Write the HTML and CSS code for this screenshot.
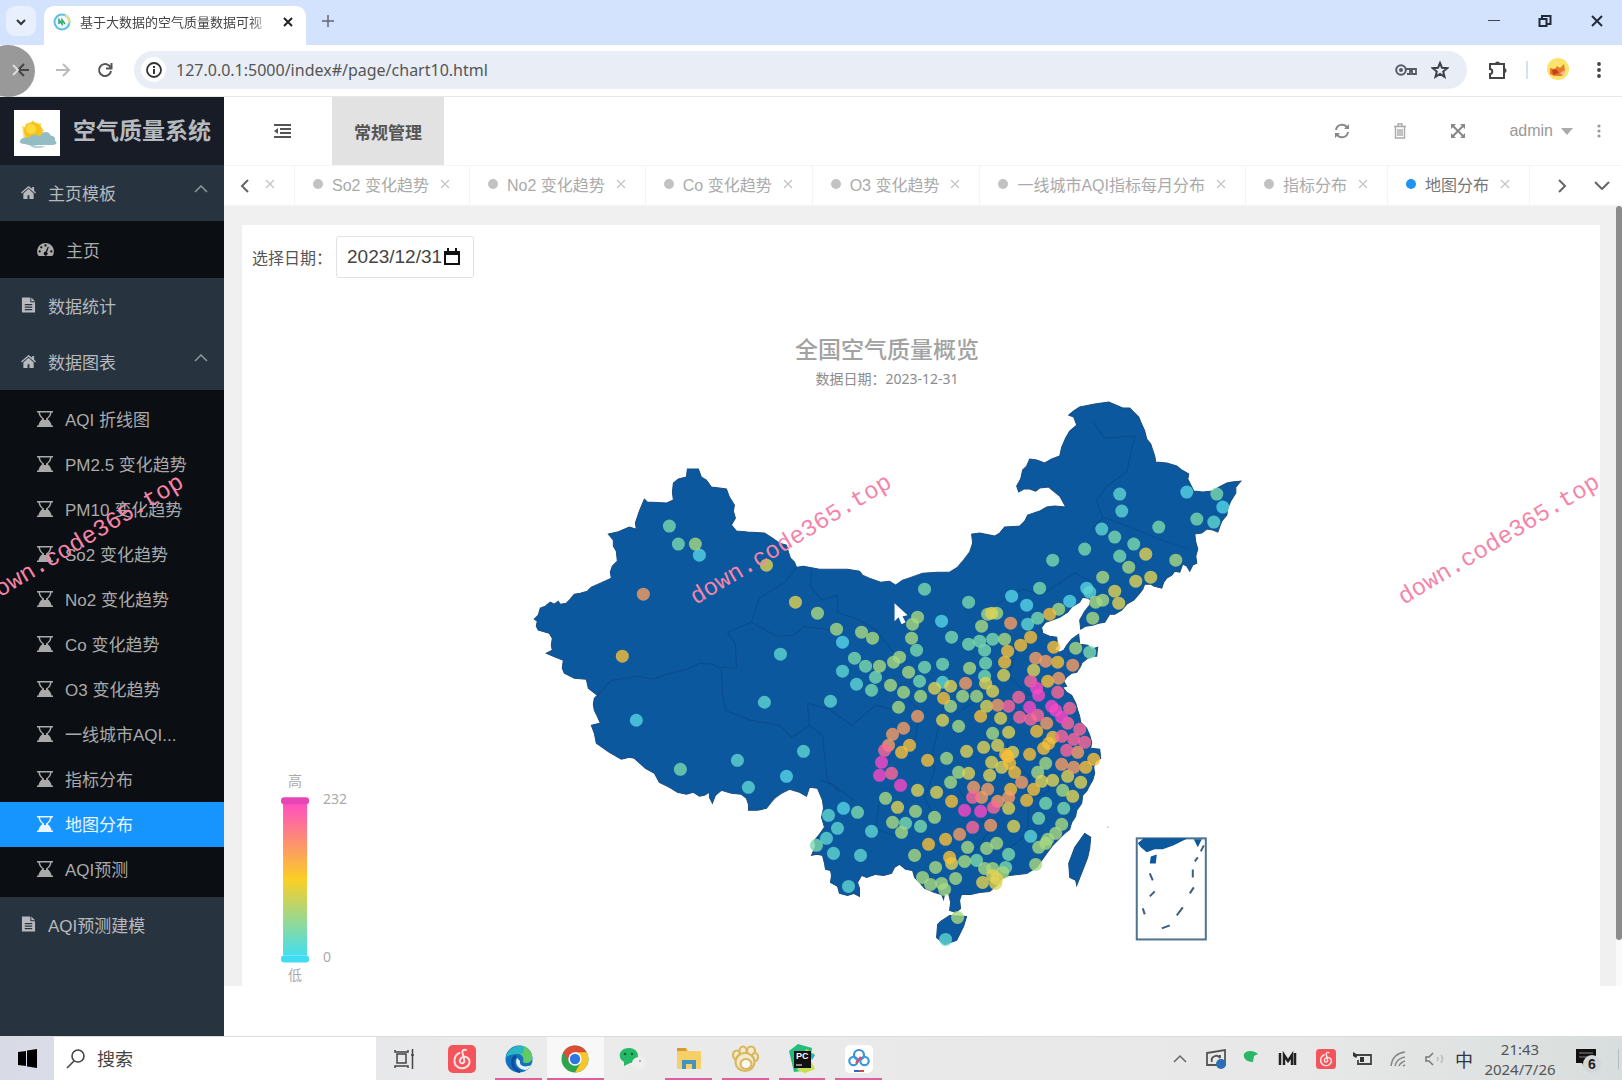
FILE: index.html
```html
<!DOCTYPE html>
<html lang="zh-CN">
<head>
<meta charset="utf-8">
<title>基于大数据的空气质量数据可视化</title>
<link rel="stylesheet" href="styles.css">
</head>
<body>
<svg class="defs" width="0" height="0" aria-hidden="true">
  <symbol id="i-home" viewBox="0 0 16 16"><path d="M8 1 0 8l1 1 7-6 7 6 1-1-2-2V2h-2v2zM8 4 2.500 9v6H7v-4h2v4h4.500V9z"/></symbol>
  <symbol id="i-file" viewBox="0 0 16 16"><path fill-rule="evenodd" d="M1 0h9v5h5v11H1zM11 0l4 4h-4zM4 7v1.300h8V7zm0 2.600v1.300h8V9.600zm0 2.600v1.300h8v-1.300z"/></symbol>
  <symbol id="i-dash" viewBox="0 0 18 16"><path fill-rule="evenodd" d="M9 1a9 9 0 0 0-8 13l1 1h14l1-1A9 9 0 0 0 9 1zM9 2.500a1.200 1.200 0 1 1 0 2.400 1.200 1.200 0 0 1 0-2.400zM4.500 4.500a1.200 1.200 0 1 1 0 2.400 1.200 1.200 0 0 1 0-2.400zM2.800 8.800a1.200 1.200 0 1 1 0 2.400 1.200 1.200 0 0 1 0-2.400zm12.400 0a1.200 1.200 0 1 1 0 2.400 1.200 1.200 0 0 1 0-2.400zM11.500 5l1 .4-2 5.600a2 2 0 1 1-1.500-.5z"/></symbol>
  <symbol id="i-glass" viewBox="0 0 16 16"><path fill-rule="evenodd" d="M0 0h16v1.500h-1.500C14.500 4 12.500 6.500 10.500 8c2 1.500 4 4 4 6.500H16V16H0v-1.500h1.500C1.500 12 3.500 9.500 5.500 8c-2-1.500-4-4-4-6.500H0zM3 1.500C3 4 5 6.500 7 7.500v1.500h2v-1.500c2-1 4-3.500 4-6z"/></symbol>
  <symbol id="i-up" viewBox="0 0 14 8"><path d="M1 7l6-6 6 6" fill="none" stroke="currentColor" stroke-width="1.500"/></symbol>
  <symbol id="i-x" viewBox="0 0 12 12"><path d="M2 2l8 8M10 2l-8 8" fill="none" stroke="currentColor" stroke-width="1.300"/></symbol>
  <symbol id="i-netease" viewBox="0 0 28 28"><rect width="28" height="28" rx="5" fill="#f4545c"/><path d="M18 5c-3-1-4 1-3.500 3l1.800 7.500c.5 3-4 4-4.500.8-.4-3 3-5 6-4.300 5 1.500 5 8-.3 10.500-6 2.500-11.500-1.500-11-7.500.3-3.500 2.500-6 5-7" fill="none" stroke="#ffe3e3" stroke-width="2" stroke-linecap="round"/></symbol>
</svg>

<header class="browser">
  <div class="tabstrip">
    <button class="tab-search" aria-label="搜索标签页"><svg width="10" height="7" viewBox="0 0 10 7"><path d="M1 1l4 4 4-4" fill="none" stroke="#333" stroke-width="2"/></svg></button>
    <div class="browser-tab">
      <svg width="18" height="18" viewBox="0 0 18 18"><circle cx="9" cy="9" r="7.500" fill="#eefafa" stroke="#62bde6" stroke-width="2"/><path d="M12 2a8 8 0 0 1 4 8" fill="none" stroke="#efe07a" stroke-width="2"/><path d="M6 11V7l3 4V7l3 4" fill="none" stroke="#38a878" stroke-width="1.600"/></svg>
      <span class="browser-tab-title">基于大数据的空气质量数据可视</span>
      <button class="plain" aria-label="关闭标签页"><svg width="12" height="12" viewBox="0 0 12 12"><path d="M2 2l8 8M10 2l-8 8" stroke="#222" stroke-width="2"/></svg></button>
    </div>
    <button class="plain new-tab" aria-label="新标签页"><svg width="12" height="12" viewBox="0 0 12 12"><path d="M6 0v12M0 6h12" stroke="#667" stroke-width="1.500"/></svg></button>
    <div class="window-buttons">
      <button class="plain" aria-label="最小化"><svg width="12" height="12" viewBox="0 0 12 12"><path d="M0 5.500h12" stroke="#444"/></svg></button>
      <button class="plain" aria-label="还原"><svg width="14" height="14" viewBox="0 0 14 14"><path d="M1.500 5h7v7h-7zM4 5V2h8.500v8H9" fill="none" stroke="#222b38" stroke-width="2"/></svg></button>
      <button class="plain" aria-label="关闭"><svg width="14" height="14" viewBox="0 0 14 14"><path d="M2 2l10 10M12 2L2 12" stroke="#222b38" stroke-width="2"/></svg></button>
    </div>
  </div>
  <div class="toolbar">
    <span class="touch-ring"></span>
    <button class="plain nav-btn" aria-label="后退"><svg width="18" height="16" viewBox="0 0 18 16"><path d="M17 8H7M12 2L6 8l6 6" fill="none" stroke="#444" stroke-width="2"/><path d="M1 3l5 5-5 5" fill="none" stroke="#ddd" stroke-width="2"/></svg></button>
    <button class="plain nav-btn" aria-label="前进"><svg width="16" height="14" viewBox="0 0 16 14"><path d="M1 7h13M8 1l6 6-6 6" fill="none" stroke="#bbb" stroke-width="2"/></svg></button>
    <button class="plain nav-btn" aria-label="刷新"><svg width="16" height="16" viewBox="0 0 16 16"><path d="M14 9a6 6 0 1 1-2-5.500L14 6M14.500 1v5.500H9" fill="none" stroke="#555" stroke-width="2"/></svg></button>
    <div class="omnibox">
      <span class="site-info"><svg width="16" height="16" viewBox="0 0 16 16"><circle cx="8" cy="8" r="7" fill="none" stroke="#333" stroke-width="1.800"/><path d="M8 7v5M8 4v2" stroke="#333" stroke-width="2"/></svg></span>
      <input class="url" type="text" aria-label="地址" value="127.0.0.1:5000/index#/page/chart10.html">
      <svg width="22" height="12" viewBox="0 0 22 12"><circle cx="6" cy="6" r="4.800" fill="none" stroke="#555b66" stroke-width="2"/><circle cx="6" cy="6" r="2" fill="#555b66"/><path d="M11 5h10v5h-4V7h-2v3h-3" fill="none" stroke="#555b66" stroke-width="1.800"/></svg>
      <svg width="18" height="18" viewBox="0 0 18 18"><path d="M9 2l2 4.800 5.200.4-4 3.400 1.300 5.200L9 13l-4.500 2.800 1.300-5.200-4-3.400L7 6.800z" fill="none" stroke="#3c4048" stroke-width="2"/></svg>
    </div>
    <button class="plain" aria-label="扩展程序"><svg width="20" height="20" viewBox="0 0 20 20"><path d="M2 4h14v14H2v-4c3 0 3-5 0-5z" fill="none" stroke="#444" stroke-width="2"/><path d="M7 4a2.500 2.500 0 0 1 5 0zM16 8a2.500 2.500 0 0 1 0 5z" fill="#444"/></svg></button>
    <span class="toolbar-sep"></span>
    <button class="plain" aria-label="用户"><svg width="24" height="24" viewBox="0 0 24 24"><circle cx="12" cy="11" r="11" fill="#fbe46c"/><path d="M4 10l5 1 2-3 3 2 4-4 1 7-3 5-8 0-4-2z" fill="#e87a2c"/><path d="M6 12l4-1 3 4-6 2z" fill="#c5401e"/><path d="M14 15l5-3-2 6z" fill="#f3b6a0"/></svg></button>
    <button class="plain" aria-label="菜单"><svg width="4" height="18" viewBox="0 0 4 18" fill="#444"><circle cx="2" cy="3" r="1.900"/><circle cx="2" cy="9" r="1.900"/><circle cx="2" cy="15" r="1.900"/></svg></button>
  </div>
</header>

<div class="app">
  <aside class="sidebar">
    <div class="brand">
      <svg class="brand-logo" width="46" height="46" viewBox="0 0 46 46"><rect width="46" height="46" fill="#fff"/><path d="M8 16l3 1 1-4 4 1 3-4 3 4 5-1 0 4 3 3-2 9-18 1z" fill="#f6d96a"/><circle cx="19" cy="21" r="9" fill="#f8c11a"/><circle cx="17" cy="19" r="5" fill="#fddb3c"/><path d="M6 31c1-4 7-4 9-3 2-4 9-4 11-1 1-6 9-7 11-1 2-1 5 2 4 5 3 1 1 4-2 4H24l-6 1-7-2c-3 0-6-1-5-3z" fill="#93bcc4"/><path d="M16 36h16l-5 2h-7z" fill="#b9d2d6"/></svg>
      <h1>空气质量系统</h1>
    </div>
    <nav>
      <a class="menu" href="#"><svg width="15" height="15"><use href="#i-home"/></svg><span>主页模板</span><svg class="fold" width="14" height="8"><use href="#i-up"/></svg></a>
      <div class="submenu">
        <a href="#"><svg width="17" height="15"><use href="#i-dash"/></svg><span>主页</span></a>
      </div>
      <a class="menu" href="#"><svg width="15" height="16"><use href="#i-file"/></svg><span>数据统计</span></a>
      <a class="menu" href="#"><svg width="15" height="15"><use href="#i-home"/></svg><span>数据图表</span><svg class="fold" width="14" height="8"><use href="#i-up"/></svg></a>
      <div class="submenu">
        <a href="#"><svg width="16" height="16"><use href="#i-glass"/></svg><span>AQI 折线图</span></a>
        <a href="#"><svg width="16" height="16"><use href="#i-glass"/></svg><span>PM2.5 变化趋势</span></a>
        <a href="#"><svg width="16" height="16"><use href="#i-glass"/></svg><span>PM10 变化趋势</span></a>
        <a href="#"><svg width="16" height="16"><use href="#i-glass"/></svg><span>So2 变化趋势</span></a>
        <a href="#"><svg width="16" height="16"><use href="#i-glass"/></svg><span>No2 变化趋势</span></a>
        <a href="#"><svg width="16" height="16"><use href="#i-glass"/></svg><span>Co 变化趋势</span></a>
        <a href="#"><svg width="16" height="16"><use href="#i-glass"/></svg><span>O3 变化趋势</span></a>
        <a href="#"><svg width="16" height="16"><use href="#i-glass"/></svg><span>一线城市AQI...</span></a>
        <a href="#"><svg width="16" height="16"><use href="#i-glass"/></svg><span>指标分布</span></a>
        <a class="current" href="#"><svg width="16" height="16"><use href="#i-glass"/></svg><span>地图分布</span></a>
        <a href="#"><svg width="16" height="16"><use href="#i-glass"/></svg><span>AQI预测</span></a>
      </div>
      <a class="menu" href="#"><svg width="15" height="16"><use href="#i-file"/></svg><span>AQI预测建模</span></a>
    </nav>
  </aside>

  <main class="content">
    <div class="topbar">
      <button class="plain collapse" aria-label="收起菜单"><svg width="17" height="14" viewBox="0 0 17 14"><path d="M0 1h17M6 5h11M6 9h11M0 13h17" stroke="#555" stroke-width="2"/><path d="M0 7l4-3v6z" fill="#555"/></svg></button>
      <a class="section" href="#">常规管理</a>
      <div class="tools">
        <button class="plain" aria-label="刷新"><svg width="16" height="16" viewBox="0 0 16 16"><path d="M2 7a6 6 0 0 1 11-2.500M14 9a6 6 0 0 1-11 2.500" fill="none" stroke="currentColor" stroke-width="2"/><path d="M15 1v5h-5zM1 15v-5h5z" fill="currentColor"/></svg></button>
        <button class="plain" aria-label="清理缓存"><svg width="14" height="16" viewBox="0 0 14 16"><path d="M1 3.500h12M5 3V1h4v2M2.500 4v11h9V4M5 6v7M7 6v7M9 6v7" fill="none" stroke="#aaa" stroke-width="1.400"/></svg></button>
        <button class="plain" aria-label="全屏"><svg width="16" height="16" viewBox="0 0 16 16"><path d="M2 2l12 12M14 2L2 14" stroke="currentColor" stroke-width="2"/><path d="M1 1h5L1 6zM15 1v5l-5-5zM1 15v-5l5 5zM15 15h-5l5-5z" fill="currentColor"/></svg></button>
        <button class="plain user">admin <svg width="12" height="7" viewBox="0 0 12 7"><path d="M0 0h12L6 7z" fill="#aaa"/></svg></button>
        <button class="plain" aria-label="更多"><svg width="4" height="14" viewBox="0 0 4 14" fill="#999"><circle cx="2" cy="2" r="1.600"/><circle cx="2" cy="7" r="1.600"/><circle cx="2" cy="12" r="1.600"/></svg></button>
      </div>
    </div>
    <div class="page-tabs">
      <button class="plain tab-arrow" aria-label="向左"><svg width="9" height="14" viewBox="0 0 9 14"><path d="M8 1L2 7l6 6" fill="none" stroke="currentColor" stroke-width="2"/></svg></button>
      <div class="tab-list">
        <div class="page-tab tail"><svg width="12" height="12"><use href="#i-x"/></svg></div>
        <div class="page-tab"><i></i><a href="#">So2 变化趋势</a><svg width="12" height="12"><use href="#i-x"/></svg></div>
        <div class="page-tab"><i></i><a href="#">No2 变化趋势</a><svg width="12" height="12"><use href="#i-x"/></svg></div>
        <div class="page-tab"><i></i><a href="#">Co 变化趋势</a><svg width="12" height="12"><use href="#i-x"/></svg></div>
        <div class="page-tab"><i></i><a href="#">O3 变化趋势</a><svg width="12" height="12"><use href="#i-x"/></svg></div>
        <div class="page-tab"><i></i><a href="#">一线城市AQI指标每月分布</a><svg width="12" height="12"><use href="#i-x"/></svg></div>
        <div class="page-tab"><i></i><a href="#">指标分布</a><svg width="12" height="12"><use href="#i-x"/></svg></div>
        <div class="page-tab active"><i></i><a href="#">地图分布</a><svg width="12" height="12"><use href="#i-x"/></svg></div>
      </div>
      <button class="plain tab-arrow" aria-label="向右"><svg width="9" height="14" viewBox="0 0 9 14"><path d="M1 1l6 6-6 6" fill="none" stroke="currentColor" stroke-width="2"/></svg></button>
      <button class="plain tab-arrow" aria-label="展开"><svg width="16" height="9" viewBox="0 0 16 9"><path d="M1 1l7 7 7-7" fill="none" stroke="currentColor" stroke-width="2"/></svg></button>
    </div>

    <div class="view">
      <div class="page-body">
        <section class="card">
          <form class="filter">
            <label for="date">选择日期：</label>
            <div class="date-field">
              <input id="date" type="text" value="2023/12/31">
              <svg width="16" height="18" viewBox="0 0 16 18"><path d="M1 4h14v12H1z" fill="none" stroke="#111" stroke-width="2"/><path d="M0 3h16v4H0zM3 0h2v3H3zM11 0h2v3h-2z" fill="#111"/></svg>
            </div>
          </form>
          <div class="chart">
            <h2>全国空气质量概览</h2>
            <p>数据日期：2023-12-31</p>
            <svg class="map" viewBox="243 400 1289 586" role="img" aria-label="全国空气质量地图">
              <defs><linearGradient id="scale" x1="0" y1="0" x2="0" y2="1"><stop offset="0" stop-color="#ff4fc0"/><stop offset=".5" stop-color="#fbcf24"/><stop offset="1" stop-color="#43dff0"/></linearGradient></defs>
              <path class="land" d="M535 619L539 615 541 608 546 606 551 602 555 604 559 601 561 604 567 603 571 599 575 594 581 593 588 591 592 587 601 583 612 578 611 572 613 566 618 561 617 551 614 546 614 540 609 534 618 532 630 527 637 529 636 523 640 511 645 499 648 502 667 503 674 500 673 492 674 483 679 479 687 477 688 469 699 469 702 477 707 480 712 487 720 488 727 489 730 497 735 505 734 511 736 518 732 525 737 531 748 532 765 533 773 538 780 543 787 545 789 552 791 558 795 562 797 567 804 566 820 569 848 569 860 571 863 575 870 578 881 582 890 581 896 585 903 580 909 578 923 573 938 572 950 572 958 567 964 560 970 552 973 543 972 534 980 533 995 536 1000 533 1005 527 1020 526 1025 521 1028 515 1040 511 1047 507 1055 506 1066 507 1060 496 1055 492 1049 487 1040 488 1036 491 1030 489 1024 489 1019 492 1017 486 1021 479 1023 470 1027 466 1030 459 1037 460 1045 463 1052 459 1060 456 1062 447 1066 438 1070 431 1077 425 1074 417 1069 415 1074 411 1080 407 1095 404 1109 402 1116 405 1123 408 1130 408 1135 413 1139 417 1141 422 1145 431 1147 439 1151 444 1153 450 1155 456 1156 462 1167 463 1177 466 1182 470 1189 474 1188 479 1191 485 1194 491 1203 492 1213 491 1219 487 1227 483 1232 482 1241 481 1236 487 1236 493 1231 501 1228 508 1227 515 1222 521 1218 532 1213 530 1207 529 1202 533 1195 534 1196 542 1198 549 1196 556 1197 563 1193 565 1190 571 1187 566 1183 564 1180 572 1175 571 1172 575 1167 578 1164 582 1162 588 1154 586 1151 584 1145 584 1143 589 1140 593 1134 600 1127 604 1122 610 1115 614 1110 614 1105 622 1099 623 1093 625 1086 626 1081 629 1080 620 1085 611 1090 605 1091 600 1088 598 1083 597 1080 602 1072 607 1068 612 1060 617 1052 620 1046 622 1042 627 1043 633 1050 636 1057 637 1058 645 1055 649 1060 652 1064 650 1067 645 1072 639 1079 634 1080 644 1088 645 1092 649 1098 647 1097 656 1093 656 1088 658 1082 663 1081 666 1077 672 1072 673 1067 677 1064 681 1067 686 1063 687 1067 692 1072 695 1076 703 1078 710 1080 716 1081 722 1087 728 1090 735 1092 742 1091 748 1100 749 1101 758 1096 761 1094 767 1095 773 1093 780 1090 785 1087 791 1083 795 1082 803 1077 810 1076 816 1072 822 1070 829 1065 833 1060 838 1053 845 1047 853 1042 860 1037 867 1027 873 1010 875 1002 878 997 885 990 891 980 892 971 894 962 894 960 900 961 908 956 912 950 910 951 902 949 893 945 893 944 899 942 894 935 892 925 888 920 882 915 877 913 870 906 869 900 864 895 867 892 873 884 875 876 874 867 877 862 875 858 882 860 888 860 896 854 893 848 895 840 893 838 886 831 882 832 875 831 870 826 869 825 863 823 855 817 854 812 855 816 846 815 840 820 834 825 827 822 817 824 808 823 800 818 788 810 787 807 796 800 792 790 789 782 793 775 798 770 804 767 808 758 810 749 810 749 804 747 798 742 794 732 793 722 790 716 795 713 803 710 797 710 792 705 795 700 796 694 792 687 794 678 792 670 787 660 782 655 773 646 768 635 758 630 757 622 759 610 752 597 743 595 733 592 725 596 724 601 723 598 716 595 710 594 704 595 698 598 695 589 688 587 679 575 678 565 673 563 668 564 660 554 656 547 653 553 650 552 645 553 638 550 633 539 630 537 626 538 621z"/>
              <path class="land" d="M941 921L950 915 967 916 964 926 957 940 945 944 937 937 938 924zM1085 833L1091 837 1090 848 1088 857 1083 870 1077 885 1076 880 1070 877 1069 863 1072 855 1075 847z"/>
              <path class="border" d="M598 695l14-15 28-4 12 3 20-6 18-5 10-5 14 1 8 5 1 24 3 17 25 10 29 5 12 12 18-12 13 10 2 20 3 24 12 13M722 667l15 1-1-24-8-12 24-10 8-24 25-16 12-15M812 570l-1 16 11 14 16-5v17l22 8 16 10 18 22M752 622l25 14 18-1 9-9 30 4M1093 421l12 17 30-2-8 36-20 14-10 14 6 18-12 12M1103 517l28 10 28 12 30 10M995 605l28-16 18 6 34-22 16 8M810 725l-2-22 22 6 22 16 24-20 16 4M822 780l14 6 20 15M945 702l-12 50 2 18-10 28 10 18M880 800l-4 28 20 8M1019 642l-10 34 22 20M985 665l-4 34-18 10M1012 720l-6 36 24 20-2 58-22 16M960 790l30 40-18 24M1040 750l10 40-20 10M900 690l20 20-6 40"/>
              <g class="cities" id="cities"></g>
              <path class="pointer" d="M895 603v18l4-4 3 7 4-2-3-6 5-1z"/>
              <circle cx="1108" cy="827" r="1" fill="#ccc"/>
              <g class="inset"><rect x="1137" y="838" width="69" height="101"/><path class="land" d="M1138 843l6-5h44l-14 7-11 4-8 0-8 3-6-5zM1194 839h8l-4 8zM1151 856l6-2-1 9h-6z"/><path d="M1150 873l3 7M1150 896l5-5M1143 908l2 6M1162 928l8-3M1177 915l6-8M1190 893l4-6M1193 869v8M1195 861l3-4M1201 851l3-6"/></g>
              <g class="legend">
                <text x="296" y="786" text-anchor="middle">高</text>
                <rect x="284" y="803" width="24" height="152" fill="url(#scale)"/>
                <rect x="282" y="797" width="28" height="7" rx="3" fill="#e745b4"/>
                <rect x="282" y="955" width="28" height="7" rx="3" fill="#40dcf2"/>
                <text x="324" y="804">232</text>
                <text x="324" y="962">0</text>
                <text x="296" y="980" text-anchor="middle">低</text>
              </g>
            </svg>
          </div>
        </section>
      </div>
      <div class="scrollbar"><div class="thumb"></div></div>
    </div>
  </main>
</div>

<footer class="taskbar">
  <button class="plain start" aria-label="开始"><svg width="19" height="19" viewBox="0 0 19 19"><path d="M0 3l8-1v15l-8-1zM9 1.500L19 0v19L9 17.500z"/></svg></button>
  <div class="search"><svg width="20" height="20" viewBox="0 0 20 20"><circle cx="12" cy="7" r="6" fill="none" stroke="#444" stroke-width="1.600"/><path d="M8 12l-7 7" stroke="#444" stroke-width="1.600"/></svg><input type="text" aria-label="搜索" placeholder="搜索"></div>
  <div class="apps">
    <button class="plain" aria-label="任务视图"><svg width="22" height="20" viewBox="0 0 22 20"><path d="M3 5h9v9H3zM1 1v2h13V1M1 19v-2h13v2M18.500 0v20M17 6h3" fill="none" stroke="#444" stroke-width="1.500"/></svg></button>
    <button class="plain" aria-label="网易云音乐"><svg width="28" height="28"><use href="#i-netease"/></svg></button>
    <button class="plain open" aria-label="Edge"><svg width="28" height="28" viewBox="0 0 28 28"><circle cx="14" cy="14" r="13.500" fill="#1272bd"/><path d="M1 12C3 3 12 0 18 1c7 2 10 8 9 13-1 4-6 5-9 3 2-4-1-8-6-8S3 11 1 12z" fill="#29b5c4"/><path d="M18 1c7 2 10 8 9 13-1 4-6 5-9 3 2-4-1-7-3-8 4-1 5-4 3-8z" fill="#62cb65"/><path d="M12 13c-3 6 2 12 9 12 2-1 4-3 5-5-6 3-12 1-11-4z" fill="#eaf2f6"/><path d="M11 11c-5 3-5 12 4 16" fill="none" stroke="#0c4f9c" stroke-width="3"/></svg></button>
    <button class="plain open focused" aria-label="Chrome"><svg width="28" height="28" viewBox="0 0 28 28"><circle cx="14" cy="14" r="13.500" fill="#2da44e"/><path d="M2.300 7.300A13.500 13.500 0 0 1 25.700 7.300H14L8.200 17.300z" fill="#de4b37"/><path d="M25.700 7.300A13.500 13.500 0 0 1 14 27.500L19.800 17.300 14 7.300z" fill="#fbc42a"/><circle cx="14" cy="14" r="6.700" fill="#fff"/><circle cx="14" cy="14" r="5.200" fill="#2f76e5"/></svg></button>
    <button class="plain" aria-label="微信"><svg width="28" height="28" viewBox="0 0 28 28"><path d="M11 3c6 0 9 4 9 8s-4 7-8 7l-6 3v-4c-8-5-4-14 5-14z" fill="#25b866"/><circle cx="7" cy="9" r="1.300" fill="#0c6638"/><circle cx="14" cy="9" r="1.300" fill="#0c6638"/><ellipse cx="21" cy="18" rx="7" ry="6" fill="#efefef"/><circle cx="22" cy="16" r="1" fill="#999"/></svg></button>
    <button class="plain open" aria-label="文件资源管理器"><svg width="26" height="24" viewBox="0 0 26 24"><path d="M1 1h9l2 3h13v18H1z" fill="#f7cf68"/><path d="M1 1h9l1 3H1z" fill="#d99a2c"/><path d="M6 22v-9h14v9h-4v-5h-6v5z" fill="#4592bd"/></svg></button>
    <button class="plain open" aria-label="Navicat"><svg width="28" height="28" viewBox="0 0 28 28" fill="#f3ead0" stroke="#d9b75c" stroke-width="2.200"><ellipse cx="5.500" cy="10" rx="3.500" ry="4.500"/><ellipse cx="12" cy="6" rx="3.500" ry="4.500"/><ellipse cx="20" cy="6" rx="4" ry="4.500"/><ellipse cx="24" cy="12" rx="3" ry="4"/><ellipse cx="14" cy="17" rx="9.500" ry="9"/><ellipse cx="15" cy="19" rx="5.500" ry="5" fill="#fafafa"/></svg></button>
    <button class="plain open" aria-label="PyCharm"><svg width="28" height="30" viewBox="0 0 28 30"><path d="M1 7l9-7 14 4-3 22-15 2z" fill="#22bd7f"/><path d="M18 5l9 5-4 7 4 8-10 4-8-3z" fill="#c9df52"/><path d="M21 8l6 3-3 5z" fill="#28a8d0"/><rect x="6" y="7" width="17" height="17" fill="#111"/><text x="8" y="15" font-family="Liberation Sans, sans-serif" font-size="9" font-weight="700" fill="#fff">PC</text><path d="M8 21h6" stroke="#fff"/></svg></button>
    <button class="plain open" aria-label="百度网盘"><svg width="28" height="28" viewBox="0 0 28 28"><rect width="28" height="28" rx="5" fill="#fff"/><g fill="none" stroke-width="2.200"><circle cx="14" cy="10" r="5" stroke="#3a8fd4"/><circle cx="8.500" cy="16" r="4.200" stroke="#3a9bdc"/><circle cx="19.500" cy="16" r="4.200" stroke="#3a9bdc"/><path d="M11 18l5-6" stroke="#e0485f"/></g><path d="M9 26h5" stroke="#3168c8" stroke-width="2"/><path d="M14 26h5" stroke="#d84545" stroke-width="2"/></svg></button>
  </div>
  <div class="tray">
    <svg width="36" height="20" viewBox="-11 -6 36 20"><path d="M1 7l6-6 6 6" fill="none" stroke="#666" stroke-width="1.500"/></svg>
    <svg width="36" height="20" viewBox="0 0 36 20"><path d="M9 4l18-3v15H9zM14 13c-2-6 6-8 8-4v-3" fill="none" stroke="#555" stroke-width="1.800"/><circle cx="23" cy="15" r="5" fill="#2c6fb4"/></svg>
    <svg width="36" height="20" viewBox="0 0 36 20"><path d="M10 5c2-4 10-4 14 0l-4 2-1 6c-7 0-10-4-9-8z" fill="#29b765"/></svg>
    <svg width="38" height="20" viewBox="2 0 38 20"><path d="M12 4v12M16 16V6l4 6 4-6v10M27 4v12" fill="none" stroke="#222" stroke-width="2.500"/></svg>
    <svg width="38" height="20" viewBox="-8 0 38 20"><use href="#i-netease" width="20" height="20"/></svg>
    <svg width="36" height="20" viewBox="2 0 36 20"><path d="M13 6h14v9H14v-4" fill="none" stroke="#444" stroke-width="1.800"/><rect x="16" y="8" width="4" height="5" fill="#333"/><path d="M9 3l5 3-2 3-3-2z" fill="#333"/></svg>
    <svg width="36" height="20" viewBox="2 0 36 20"><path d="M11 17C12 9 17 4 25 3M15 17c1-5 4-8 10-9M19 17c1-3 3-4 6-5M23 17l2-1" fill="none" stroke="#888" stroke-width="1.500"/></svg>
    <svg width="34" height="20" viewBox="0 0 34 20"><path d="M15 4l-4 4H8v4h3l4 4" fill="none" stroke="#777" stroke-width="1.500"/><path d="M19 8q2 2 0 4M23 6q3 4 0 8" fill="none" stroke="#bbb" stroke-width="1.500"/></svg>
    <span class="ime">中</span>
    <time class="clock" datetime="2024-07-26T21:43"><span>21:43</span><span>2024/7/26</span></time>
    <div class="notice"><svg width="20" height="20" viewBox="0 0 20 20"><path d="M0 0h20v14H12l-3 5-3-5H0z" fill="#111"/><path d="M3 4h14M3 8h14" stroke="#888"/></svg><span class="badge">6</span></div>
  </div>
</footer>

<div class="watermarks" aria-hidden="true"><span>down.code365.top</span><span>down.code365.top</span><span>down.code365.top</span></div>
<script src="cities.js"></script>
</body>
</html>
```
FILE: styles.css
```css
* { box-sizing: border-box; }
body {
  margin: 0;
  min-height: 100vh;
  display: flex;
  flex-direction: column;
  position: relative;
  overflow-x: hidden;
  background: #fff;
  font-family: "Liberation Sans", "Noto Sans CJK SC", sans-serif;
  font-size: 17px;
  color: #555;
}
h1, h2, p { margin: 0; }
a { color: inherit; text-decoration: none; }
svg { flex: none; }
.defs { position: absolute; }
input { font: inherit; color: inherit; border: 0; background: none; padding: 0; min-width: 0; outline: 0; }
.plain {
  border: 0;
  background: none;
  padding: 0;
  font: inherit;
  color: inherit;
  display: flex;
  align-items: center;
  justify-content: center;
}

/* browser window */
.tabstrip { display: flex; align-items: center; height: 45px; background: #d3e3fd; padding: 0 18px 3px 6px; }
.tab-search { width: 30px; height: 30px; border: 0; border-radius: 9px; background: #e8f0fe; padding: 0; }
.browser-tab {
  align-self: flex-end;
  width: 262px;
  height: 39px;
  margin: 0 0 -3px 8px;
  padding: 0 12px 8px 9px;
  display: flex;
  align-items: center;
  gap: 9px;
  background: #fff;
  border-radius: 10px 10px 0 0;
}
.browser-tab-title {
  flex: 1;
  white-space: nowrap;
  font-size: 13px;
  color: #444;
  mask-image: linear-gradient(90deg, #000 88%, transparent);
}
.new-tab { margin-left: 16px; }
.window-buttons { margin-left: auto; display: flex; gap: 38px; }
.toolbar {
  position: relative;
  display: flex;
  align-items: center;
  height: 52px;
  padding: 0 21px 2px 0;
  border-bottom: 1px solid #e8e8ea;
}
.touch-ring { position: absolute; left: -19px; top: 0; width: 54px; height: 52px; border-radius: 50%; background: #999; }
.nav-btn { position: relative; width: 42px; }
.omnibox {
  flex: 1;
  display: flex;
  align-items: center;
  gap: 14px;
  height: 38px;
  margin: 0 21px 0 8px;
  padding: 0 18px 0 7px;
  border-radius: 19px;
  background: #e9edf6;
}
.site-info { width: 25px; height: 25px; border-radius: 50%; background: #fff; display: flex; align-items: center; justify-content: center; }
.url { flex: 1; margin-left: -4px; font: 16px "Noto Sans", sans-serif; color: #555; }
.toolbar-sep { width: 2px; height: 18px; margin: 0 18px; background: #d5e0f5; }
.toolbar .plain:last-child { margin-left: 27px; }

/* sidebar */
.app { flex: 1; display: flex; }
.sidebar { width: 224px; flex: none; background: #27333f; color: #b6babe; }
.brand { display: flex; align-items: center; gap: 13px; height: 68px; padding: 4px 14px 0; background: #171c26; }
.brand h1 { font-size: 23px; line-height: 30px; margin-bottom: 4px; white-space: nowrap; }
.menu { display: flex; align-items: center; gap: 12px; height: 56px; padding: 0 16px 2px 21px; }
.fold { margin-left: auto; margin-bottom: 6px; color: #8f979e; }
.menu svg:first-child, .submenu svg { fill: currentColor; }
.submenu { padding: 7px 0 5px; background: #0b0e12; }
.submenu a { display: flex; align-items: center; gap: 12px; height: 45px; padding: 0 0 2px 37px; white-space: nowrap; color: #aaa; }
.submenu .current { background: #1695ff; color: #eaf5ff; }

/* content header */
.content { flex: 1; min-width: 0; display: flex; flex-direction: column; }
.topbar { display: flex; height: 68px; }
.collapse { width: 108px; padding-left: 8px; }
.section { display: flex; align-items: center; padding: 0 22px; background: #e2e2e2; font-weight: 700; color: #555; }
.tools { display: flex; align-items: center; margin-left: auto; padding-right: 21px; color: #888; }
.tools > .plain + .plain { margin-left: 43px; }
.tools .user { font-size: 16px; color: #999; gap: 8px; }
.tools > .user + .plain { margin-left: 24px; }
.page-tabs { display: flex; height: 41px; border-top: 1px solid #f5f5f5; border-bottom: 1px solid #f3f3f3; }
.tab-arrow { width: 40px; flex: none; color: #666; }
.tab-list { flex: 1; min-width: 0; display: flex; overflow: hidden; }
.page-tab {
  display: flex;
  align-items: center;
  flex: none;
  padding: 0 18px 3px;
  border-right: 1px solid #f5f5f5;
  font-size: 16px;
  color: #aaa;
}
.page-tab i { width: 10px; height: 10px; margin-right: 9px; border-radius: 50%; background: #c2c2c2; }
.page-tab svg { margin-left: 10px; color: #c4c4c4; }
.page-tab.tail { padding-left: 0; }
.page-tab.tail svg { margin-left: 0; }
.page-tab.active { color: #777; }
.page-tab.active i { background: #1e95f3; }

/* page */
.view { display: flex; }
.page-body { flex: 1; min-width: 0; padding: 19px 16px 0 18px; background: #f0f0f0; }
.scrollbar { width: 6px; background: #fafafa; }
.thumb { height: 94%; border-radius: 3px; background: #8c8c8c; }
.card { background: #fff; padding-top: 11px; }
.filter { display: flex; align-items: center; height: 42px; padding-left: 10px; }
.filter label { width: 84px; white-space: nowrap; font-size: 16px; color: #555; }
.date-field { display: flex; align-items: center; width: 138px; height: 42px; padding: 0 12px 0 10px; border: 1px solid #e2e2e2; border-radius: 3px; }
.date-field input { width: 97px; font-size: 19px; color: #444; }
.chart { width: 95%; padding-top: 56px; text-align: center; }
.chart h2 { font-size: 23px; line-height: 32px; font-weight: 500; color: #a2a2a2; }
.chart p { font: 14px/20px "Noto Sans", "Noto Sans CJK SC", sans-serif; color: #8c8c8c; padding: 3px 0 11px; }
.map { display: block; width: 100%; }
.land { fill: #0b589f; stroke: #1a4d80; stroke-width: 1; }
.border { fill: none; stroke: #0a4c8c; stroke-width: 1; }
.cities circle { fill-opacity: .8; }
.pointer { fill: #fff; }
.inset rect { fill: #fff; stroke: #4d7390; stroke-width: 2; }
.inset path { fill: none; stroke: #3c5f80; stroke-width: 2; }
.inset .land { fill: #0b589f; stroke: none; }
.legend text { font: 14px "Noto Sans", "Noto Sans CJK SC", sans-serif; fill: #aaa; }

/* taskbar */
.taskbar { display: flex; height: 44px; border-top: 1px solid #dcdcdc; background: linear-gradient(90deg, #d8dbe6, #ebebeb 30%, #e8e8e8 80%, #d8dedd); }
.start { width: 54px; flex: none; }
.search { width: 322px; flex: none; display: flex; align-items: center; gap: 11px; padding-left: 12px; background: #fff; }
.search input { flex: 1; font-size: 18px; padding-top: 4px; }
.search input::placeholder { color: #444; opacity: 1; }
.apps { display: flex; width: 510px; flex: none; margin-left: 1px; }
.apps .plain { flex: 1; position: relative; }
.apps .open::after { content: ""; position: absolute; left: 5px; right: 5px; bottom: 0; height: 2px; background: #e0609f; }
.apps .focused { background: #f8f8f8; }
.apps .focused::after { left: 0; right: 0; }
.tray { display: flex; align-items: center; margin-left: auto; padding-right: 3px; }
.ime { width: 24px; font-size: 18px; color: #334; text-align: center; }
.clock { display: flex; flex-direction: column; width: 88px; text-align: center; font: 15px/20px "Noto Sans", sans-serif; color: #555; }
.notice { position: relative; display: flex; width: 55px; padding-left: 12px; border-right: 1px solid #bbb; }
.badge { position: absolute; left: 19px; top: 6px; width: 18px; height: 18px; border-radius: 50%; background: #d3d7d7; font-size: 14px; font-weight: 700; line-height: 18px; text-align: center; color: #222; }

/* repeated site mark over the page */
.watermarks { position: absolute; inset: 0; overflow: hidden; pointer-events: none; }
.watermarks span {
  position: absolute;
  top: 526px;
  left: 676px;
  width: 232px;
  font: 24px/28px "Liberation Mono", monospace;
  color: #f585a8;
  transform: rotate(-31deg);
}
.watermarks span:first-child { left: -32px; }
.watermarks span:last-child { left: 1384px; }
```
FILE: cities.js
```js
// City stations grouped by colour band, as x,y pairs on the map canvas.
const bands = {
  "#54d4e6": "700,555 843,642 637,720 787,776 1012,596 1027,605 1087,588 1070,601 942,621 844,808 1187,492 1223,507",
  "#5fd6d0": "781,654 765,702 831,701 738,760 749,787 804,751 1090,592 1028,624 843,671 857,684 943,682 1031,836 829,815 838,828 827,838 834,853 861,855 872,831 849,886 946,939 1120,494 1122,511 1102,529 1214,522",
  "#7bd9ac": "670,526 679,544 681,769 925,589 969,602 1040,588 1053,560 1038,618 917,650 952,637 969,644 980,641 985,650 993,639 1090,652 855,658 866,666 876,677 872,690 925,667 943,664 920,681 986,663 985,676 1046,803 1064,808 1039,818 921,826 906,823 858,812 817,845 977,860 1009,854 1006,867 1115,537 1134,544 1120,556 1085,549 1159,527 1217,494 1197,519",
  "#a6d980": "696,544 818,613 837,629 862,632 873,638 1103,577 1096,602 1103,600 1093,618 1059,609 997,613 988,614 982,626 918,617 913,624 912,638 1005,639 1076,648 880,666 894,662 900,657 909,672 891,685 904,692 921,696 899,707 970,668 951,706 963,696 977,696 959,726 947,758 993,733 1046,763 1038,772 1063,790 1062,824 1056,833 1048,839 1046,843 1039,847 1036,864 959,772 951,782 886,798 916,811 935,817 893,822 902,832 968,847 915,855 936,867 965,861 987,848 997,843 923,877 931,884 942,883 945,889 956,878 985,868 993,868 1003,872 958,917 1129,567 1176,560",
  "#e0d352": "767,565 796,602 1115,591 1119,603 992,613 1004,675 1034,670 935,688 951,686 986,683 993,691 987,706 1001,718 943,720 967,751 984,747 1009,732 998,745 1013,752 992,762 1002,767 990,775 1068,776 1081,782 1042,781 1053,780 1073,796 1009,808 1014,826 969,773 937,792 918,790 898,807 952,863 983,882 997,878 993,875 996,883 1146,554 1151,577 1136,581",
  "#f8bf38": "623,656 1050,614 1031,637 1021,645 1008,651 1005,662 1054,647 1058,662 944,698 1048,681 1037,731 981,716 910,745 902,752 928,760 1008,756 1006,754 1010,763 1015,772 1030,754 1044,748 1049,743 1053,737 1086,767 1094,759 1034,789 1027,800 1011,789 952,801 929,844 946,839 950,857",
  "#f69d62": "644,594 1011,623 1036,658 1046,661 1073,665 966,683 998,705 1059,678 1047,723 918,716 904,728 893,734 889,745 1078,752 1062,764 1074,767 1022,782 1009,797 998,801 982,797 974,787 988,789 991,825 960,834",
  "#ff6698": "1009,706 1019,697 1031,681 1058,692 1070,708 1068,723 1038,715 1031,719 1020,717 885,750 892,773 1062,736 1074,739 1080,729 1085,742 1067,750 994,807 973,797 973,827",
  "#fb47c4": "1037,688 1039,695 1030,707 1052,706 1056,710 1062,717 882,762 880,775 901,785 965,810 981,811"
};

const layer = document.getElementById("cities");
for (const [colour, list] of Object.entries(bands)) {
  for (const pair of list.split(" ")) {
    const [x, y] = pair.split(",");
    const dot = document.createElementNS("http://www.w3.org/2000/svg", "circle");
    dot.setAttribute("cx", x);
    dot.setAttribute("cy", y);
    dot.setAttribute("r", 6.5);
    dot.setAttribute("fill", colour);
    layer.appendChild(dot);
  }
}
```
